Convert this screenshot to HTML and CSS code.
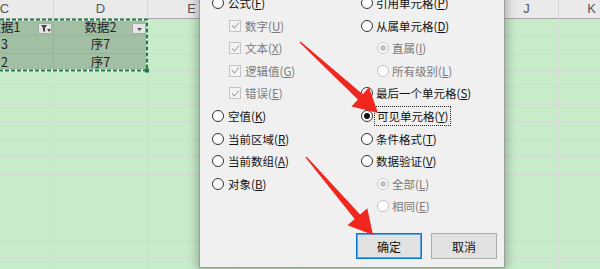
FILE: index.html
```html
<!DOCTYPE html>
<html lang="zh-CN">
<head>
<meta charset="utf-8">
<title>定位条件</title>
<link rel="stylesheet" href="styles.css">
</head>
<body>
<div class="sheet">
  <div class="h">C</div><div class="h">D</div><div class="h">E</div><div class="h"></div><div class="h"></div><div class="h"></div><div class="h"></div><div class="h">J</div><div class="h">K</div>

  <div class="c sel txt">数据1<span class="fbtn"><svg width="11" height="9" viewBox="0 0 11 9"><path d="M1 1h6L5 4v4L3 7V4z" fill="#444"/><path d="M7 5h4L9 8z" fill="#444"/></svg></span></div>
  <div class="c sel txt">数据2<span class="fbtn"><svg width="11" height="9" viewBox="0 0 11 9"><path d="M3 4h5L5.5 7z" fill="#555"/></svg></span></div>
  <div class="c"></div><div class="c"></div><div class="c"></div><div class="c"></div><div class="c"></div><div class="c"></div><div class="c"></div>

  <div class="c sel txt">3</div><div class="c sel txt">序7</div>
  <div class="c"></div><div class="c"></div><div class="c"></div><div class="c"></div><div class="c"></div><div class="c"></div><div class="c"></div>

  <div class="c sel txt">2</div><div class="c sel txt">序7</div>
  <div class="c"></div><div class="c"></div><div class="c"></div><div class="c"></div><div class="c"></div><div class="c"></div><div class="c"></div>

  <div class="c"></div><div class="c"></div><div class="c"></div><div class="c"></div><div class="c"></div><div class="c"></div><div class="c"></div><div class="c"></div><div class="c"></div>
  <div class="c"></div><div class="c"></div><div class="c"></div><div class="c"></div><div class="c"></div><div class="c"></div><div class="c"></div><div class="c"></div><div class="c"></div>
  <div class="c"></div><div class="c"></div><div class="c"></div><div class="c"></div><div class="c"></div><div class="c"></div><div class="c"></div><div class="c"></div><div class="c"></div>
  <div class="c"></div><div class="c"></div><div class="c"></div><div class="c"></div><div class="c"></div><div class="c"></div><div class="c"></div><div class="c"></div><div class="c"></div>
  <div class="c"></div><div class="c"></div><div class="c"></div><div class="c"></div><div class="c"></div><div class="c"></div><div class="c"></div><div class="c"></div><div class="c"></div>
  <div class="c"></div><div class="c"></div><div class="c"></div><div class="c"></div><div class="c"></div><div class="c"></div><div class="c"></div><div class="c"></div><div class="c"></div>
  <div class="c"></div><div class="c"></div><div class="c"></div><div class="c"></div><div class="c"></div><div class="c"></div><div class="c"></div><div class="c"></div><div class="c"></div>
  <div class="c"></div><div class="c"></div><div class="c"></div><div class="c"></div><div class="c"></div><div class="c"></div><div class="c"></div><div class="c"></div><div class="c"></div>
  <div class="c"></div><div class="c"></div><div class="c"></div><div class="c"></div><div class="c"></div><div class="c"></div><div class="c"></div><div class="c"></div><div class="c"></div>
</div>

<svg class="marquee" width="152" height="58" viewBox="0 16 152 58">
  <path d="M0 19.5H147V70.5H0" fill="none" stroke="#ffffff" stroke-width="2"/>
  <path d="M0 19.5H147V70.5H0" fill="none" stroke="#1f7a45" stroke-width="2" stroke-dasharray="4 2"/>
  <rect x="145" y="68.5" width="4" height="4" fill="#1f7a45"/>
</svg>

<div class="dialog">
  <div class="cols">
    <div class="col left">
      <div class="opt"><span class="radio"></span><span>公式(<u>F</u>)</span></div>
      <div class="opt sub dis"><span class="check"><svg width="9" height="9" viewBox="0 0 9 9"><path d="M1 4.5l2.5 2.5L8 1.5" fill="none" stroke="#a8a8a8" stroke-width="1.1"/></svg></span><span>数字(<u>U</u>)</span></div>
      <div class="opt sub dis"><span class="check"><svg width="9" height="9" viewBox="0 0 9 9"><path d="M1 4.5l2.5 2.5L8 1.5" fill="none" stroke="#a8a8a8" stroke-width="1.1"/></svg></span><span>文本(<u>X</u>)</span></div>
      <div class="opt sub dis"><span class="check"><svg width="9" height="9" viewBox="0 0 9 9"><path d="M1 4.5l2.5 2.5L8 1.5" fill="none" stroke="#a8a8a8" stroke-width="1.1"/></svg></span><span>逻辑值(<u>G</u>)</span></div>
      <div class="opt sub dis"><span class="check"><svg width="9" height="9" viewBox="0 0 9 9"><path d="M1 4.5l2.5 2.5L8 1.5" fill="none" stroke="#a8a8a8" stroke-width="1.1"/></svg></span><span>错误(<u>E</u>)</span></div>
      <div class="opt"><span class="radio"></span><span>空值(<u>K</u>)</span></div>
      <div class="opt"><span class="radio"></span><span>当前区域(<u>R</u>)</span></div>
      <div class="opt"><span class="radio"></span><span>当前数组(<u>A</u>)</span></div>
      <div class="opt"><span class="radio"></span><span>对象(<u>B</u>)</span></div>
    </div>
    <div class="col right">
      <div class="opt"><span class="radio"></span><span>引用单元格(<u>P</u>)</span></div>
      <div class="opt"><span class="radio"></span><span>从属单元格(<u>D</u>)</span></div>
      <div class="opt sub dis"><span class="radio on"></span><span>直属(<u>I</u>)</span></div>
      <div class="opt sub dis"><span class="radio"></span><span>所有级别(<u>L</u>)</span></div>
      <div class="opt"><span class="radio"></span><span>最后一个单元格(<u>S</u>)</span></div>
      <div class="opt"><span class="radio on"></span><span class="focus">可见单元格(<u>Y</u>)</span></div>
      <div class="opt"><span class="radio"></span><span>条件格式(<u>T</u>)</span></div>
      <div class="opt"><span class="radio"></span><span>数据验证(<u>V</u>)</span></div>
      <div class="opt sub dis"><span class="radio on"></span><span>全部(<u>L</u>)</span></div>
      <div class="opt sub dis"><span class="radio"></span><span>相同(<u>E</u>)</span></div>
    </div>
  </div>
  <div class="buttons">
    <button class="btn default">确定</button>
    <button class="btn">取消</button>
  </div>
</div>

<svg class="arrows" width="600" height="269" viewBox="0 0 600 269">
  <polygon points="299.5,42.5 357.9,99.4 351.5,106.4 378,113 369,87.2 362.7,94.2 300.5,41.5" fill="#f0261f"/>
  <polygon points="305.5,157.5 354.7,219.1 347.5,225.3 373,235 367.3,208.3 360.1,214.5 306.5,156.5" fill="#f0261f"/>
</svg>
</body>
</html>
```

FILE: styles.css
```css
* { box-sizing: border-box; }

body {
  margin: 0;
  width: 600px;
  height: 269px;
  overflow: hidden;
  position: relative;
  background: #c8ecca;
  font-family: "Noto Sans CJK SC", sans-serif;
}

.sheet {
  display: grid;
  grid-template-columns: 98px 94px 88px 65px 65px 65px 64px 64px 66px;
  grid-template-rows: 19px repeat(9, 17.3px) 67.5px 17.3px 17.3px;
  margin-left: -44px;
  width: 669px;
}

.h {
  background: #eaeaea;
  border-right: 1px solid #d6d6d6;
  border-bottom: 1px solid #a9a9a9;
  font-family: "Liberation Sans", sans-serif;
  font-size: 13px;
  line-height: 18px;
  color: #555;
  text-align: center;
}

.c {
  position: relative;
  background: #c8ecca;
  border-right: 1px solid #d3ddd3;
  border-bottom: 1px solid #d3ddd3;
}

.c.sel {
  background: #a2bfa3;
  border-color: #98b598;
}

.txt {
  font-size: 12.5px;
  line-height: 16px;
  color: #222;
  text-align: center;
}

.fbtn {
  position: absolute;
  right: 1px;
  top: 4px;
  width: 14px;
  height: 11px;
  border: 1px solid #a8a8a8;
  background: #e6e6e6;
  display: flex;
  align-items: center;
  justify-content: center;
}

.marquee {
  position: absolute;
  left: 0;
  top: 16px;
}

.dialog {
  position: absolute;
  left: 199px;
  top: -20px;
  width: 306px;
  height: 288px;
  background: #f0f0f0;
  border: 1px solid #9c9c9c;
  box-shadow: 0 0 10px 2px rgba(0, 0, 0, 0.28);
  padding: 10.7px 7px 0 12px;
  display: flex;
  flex-direction: column;
  font-size: 11.5px;
  color: #111;
}

.cols {
  display: flex;
}

.col.left { width: 149px; }
.col.right { flex: 1; }

.opt {
  height: 22.6px;
  display: flex;
  align-items: center;
  gap: 4px;
  white-space: nowrap;
}

.col.right .opt { gap: 3px; }

.opt.sub { padding-left: 17px; }
.col.right .opt.sub { padding-left: 16px; }

.opt.dis { color: #7a7a7a; }

u { text-decoration-thickness: 1px; text-underline-offset: 1px; }

.radio {
  width: 12px;
  height: 12px;
  border-radius: 50%;
  border: 1px solid #333;
  background: #fff;
  display: flex;
  align-items: center;
  justify-content: center;
  flex: none;
}

.radio.on::after {
  content: "";
  width: 6px;
  height: 6px;
  border-radius: 50%;
  background: #111;
}

.dis .radio {
  border-color: #c4c4c4;
  background: #fff;
}

.dis .radio.on::after { background: #c4c4c4; }

.check {
  width: 12px;
  height: 12px;
  border: 1px solid #c4c4c4;
  background: #f4f4f4;
  display: flex;
  align-items: center;
  justify-content: center;
  flex: none;
}

.focus {
  outline: 1px dotted #222;
  outline-offset: 1px;
  padding: 0 1px;
}

.buttons {
  display: flex;
  justify-content: flex-end;
  gap: 9px;
  margin-top: auto;
  margin-bottom: 8px;
}

.btn {
  width: 66px;
  height: 26px;
  background: #e1e1e1;
  border: 1px solid #adadad;
  font-family: "Noto Sans CJK SC", sans-serif;
  font-size: 12px;
  color: #111;
  padding: 0;
}

.btn.default {
  border: 1px solid #0078d7;
  box-shadow: inset 0 0 0 1px #5ea3e6;
}

.arrows {
  position: absolute;
  left: 0;
  top: 0;
}
```
